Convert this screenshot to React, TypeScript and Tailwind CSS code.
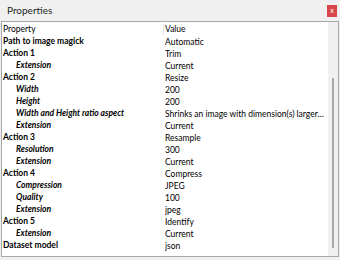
const rows: { name: string; value: string; sub?: boolean }[] = [
  { name: "Path to image magick", value: "Automatic" },
  { name: "Action 1", value: "Trim" },
  { name: "Extension", value: "Current", sub: true },
  { name: "Action 2", value: "Resize" },
  { name: "Width", value: "200", sub: true },
  { name: "Height", value: "200", sub: true },
  { name: "Width and Height ratio aspect", value: "Shrinks an image with dimension(s) larger than the corresponding width and/or height", sub: true },
  { name: "Extension", value: "Current", sub: true },
  { name: "Action 3", value: "Resample" },
  { name: "Resolution", value: "300", sub: true },
  { name: "Extension", value: "Current", sub: true },
  { name: "Action 4", value: "Compress" },
  { name: "Compression", value: "JPEG", sub: true },
  { name: "Quality", value: "100", sub: true },
  { name: "Extension", value: "jpeg", sub: true },
  { name: "Action 5", value: "Identify" },
  { name: "Extension", value: "Current", sub: true },
  { name: "Dataset model", value: "json" },
];

export default function App() {
  return (
    <div
      className="flex h-[260px] w-[340px] flex-col bg-[#f0f0f0] text-[8.5px] text-black"
      style={{ fontFamily: 'Lato, "Noto Sans", sans-serif' }}
    >
      {/* title bar */}
      <div className="flex h-[21px] shrink-0 items-center justify-between pl-[7px] pr-[3px]">
        <span className="text-[10px] text-[#1e1e1e]">Properties</span>
        <button className="flex h-[12px] w-[10px] items-center justify-center bg-[#d9474c] text-[7px] leading-none text-white">
          x
        </button>
      </div>

      {/* grid */}
      <div className="mx-[1px] mb-[3px] flex min-h-0 flex-1 border border-[#a8a8a8] bg-white">
        <div className="min-w-0 flex-1 overflow-hidden pt-[1px]">
          <div className="flex h-[12px] leading-[12px]">
            <div className="w-[162px] shrink-0 border-r border-[#e6e6e6] pl-[1px]">Property</div>
            <div className="min-w-0 flex-1 pl-[1px]">Value</div>
          </div>
          {rows.map((r, i) => (
            <div key={i} className="flex h-[12px] leading-[12px]">
              <div
                className={`w-[163px] shrink-0 truncate font-bold ${r.sub ? "pl-[14px] italic" : "pl-[1px]"}`}
              >
                {r.name}
              </div>
              <div className="min-w-0 flex-1 truncate pr-[2px] pt-[1px]">{r.value}</div>
            </div>
          ))}
        </div>
        {/* scrollbar */}
        <div className="flex w-[10px] shrink-0 justify-center bg-[#f0f0f0] pt-[56px] pb-[8px]">
          <div className="w-[2px] bg-[#a8a8a8]" />
        </div>
      </div>
    </div>
  );
}
